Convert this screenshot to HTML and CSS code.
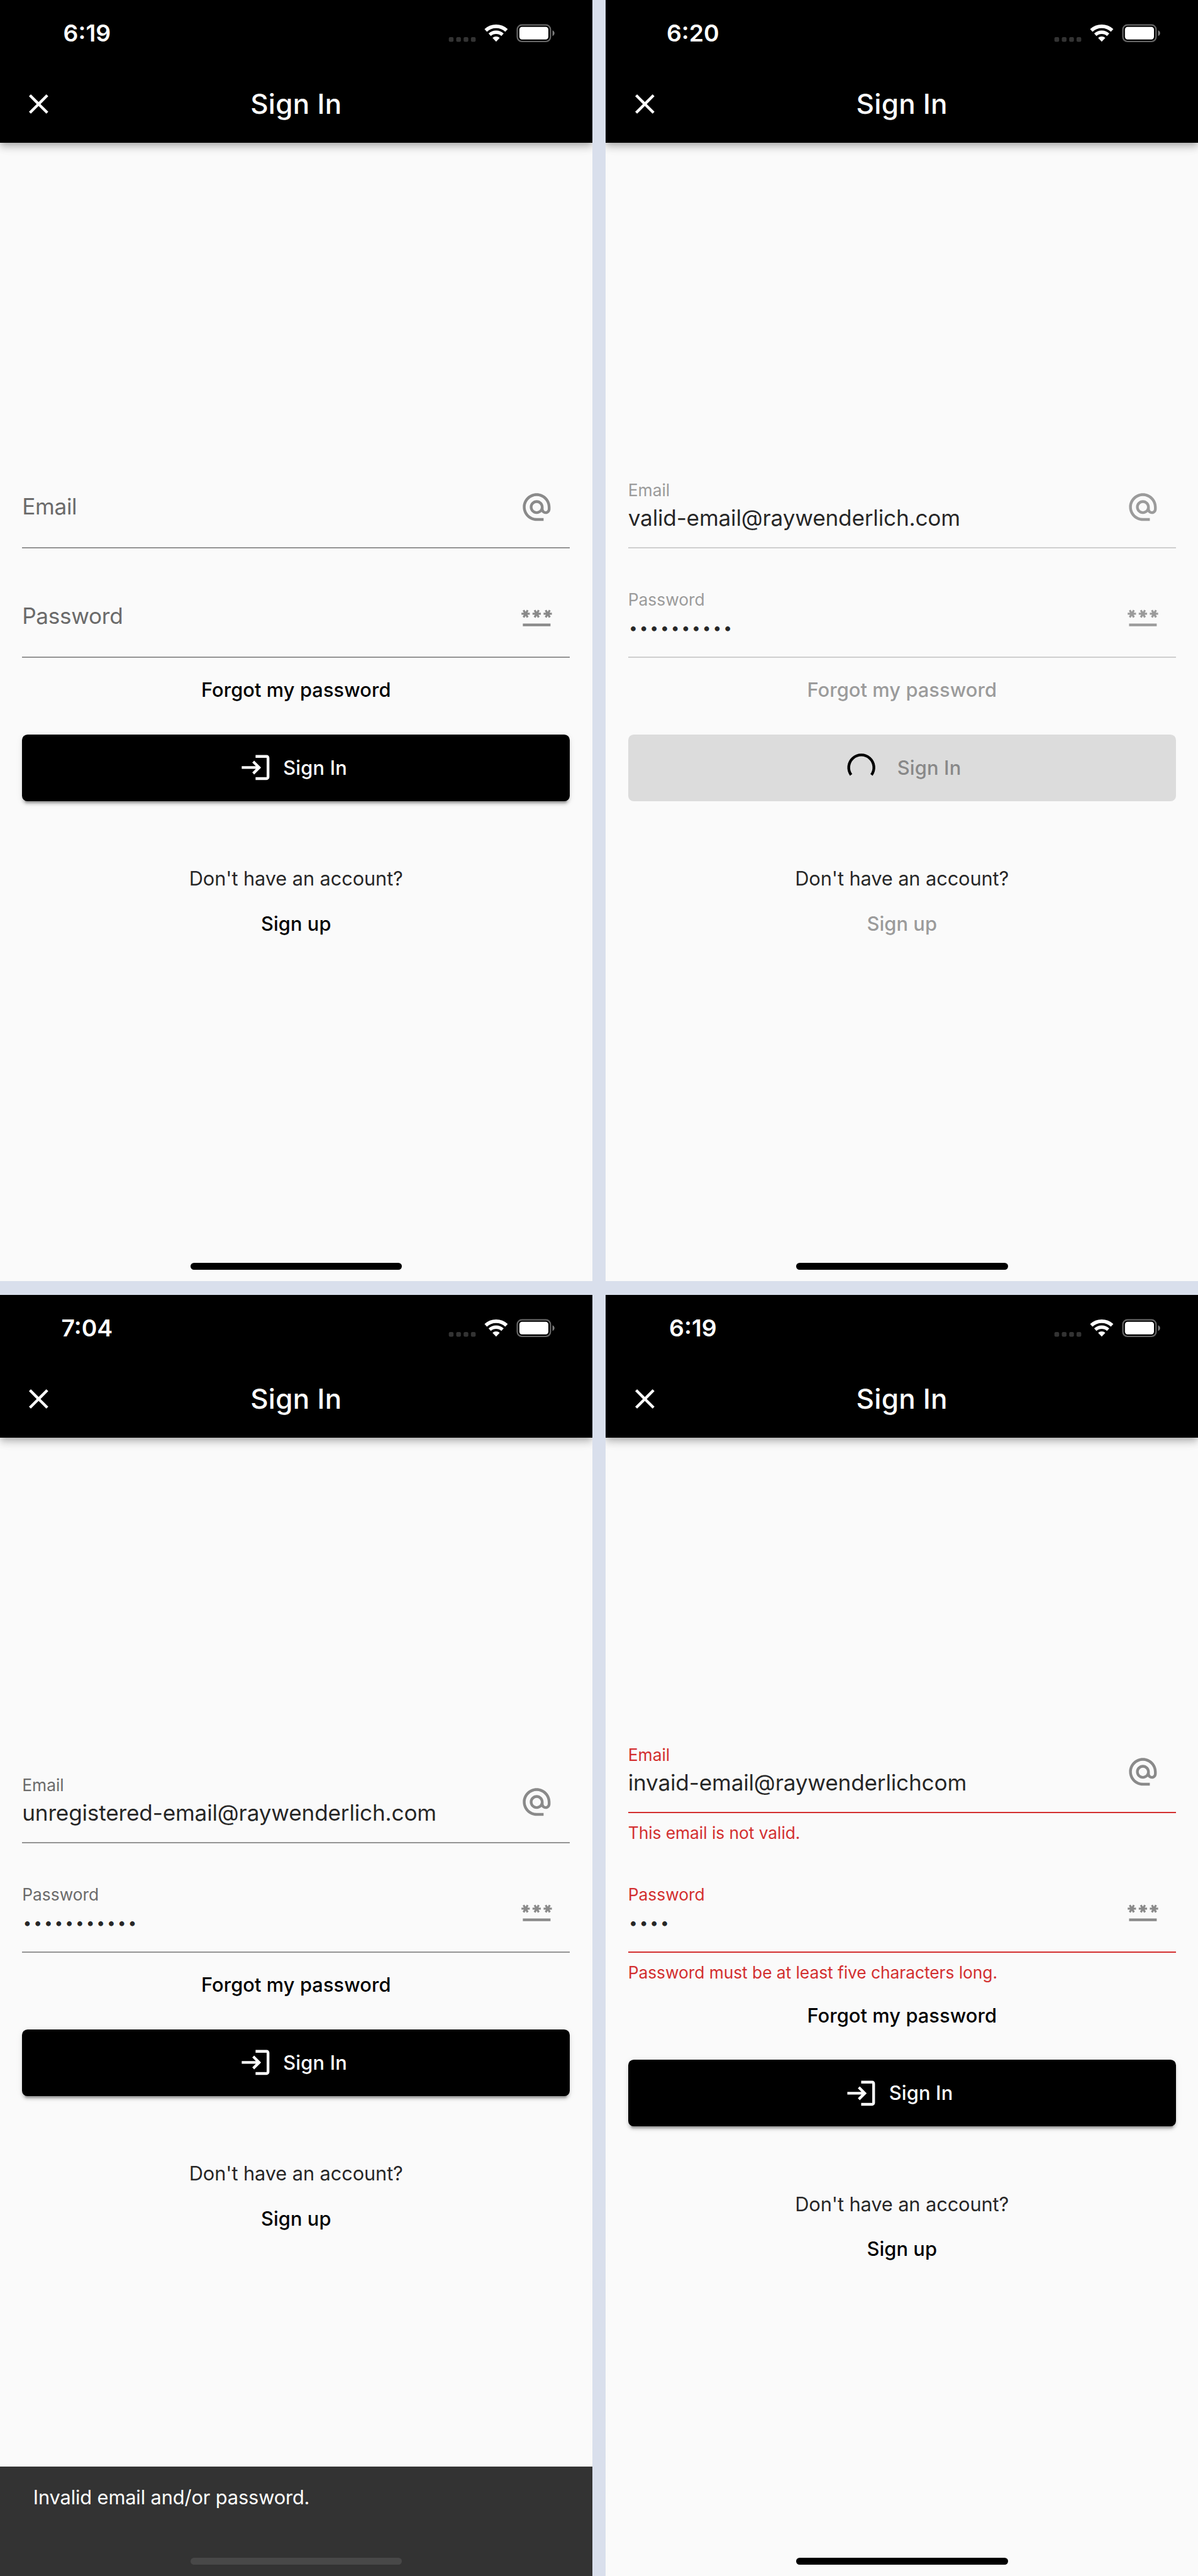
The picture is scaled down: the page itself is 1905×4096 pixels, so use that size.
FILE: index.html
```html
<!DOCTYPE html>
<html lang="en">
<head>
<meta charset="utf-8">
<title>Sign In</title>
<link rel="stylesheet" href="styles.css">
</head>
<body>
<svg class="sprite" aria-hidden="true">
  <symbol id="status" viewBox="324 17 77 14">
    <g fill="#333"><rect x="324.3" y="27" width="3.4" height="3.4" rx="1"/><rect x="329.65" y="27" width="3.4" height="3.4" rx="1"/><rect x="335" y="27" width="3.4" height="3.4" rx="1"/><rect x="340.3" y="27" width="3.4" height="3.4" rx="1"/></g>
    <g fill="none" stroke="#fff"><path stroke-width="2.6" d="M350.97 22.19A11.1 11.1 0 0 1 366.03 22.19"/><path stroke-width="2.5" d="M353.86 25.32A6.85 6.85 0 0 1 363.14 25.32"/></g>
    <path fill="#fff" d="M358.5 30.35L355.89 27.52A3.85 3.85 0 0 1 361.11 27.52Z"/>
    <rect x="373.8" y="18.2" width="24" height="12" rx="3.3" fill="none" stroke="#666"/>
    <rect x="375.3" y="19.6" width="21" height="9.1" rx="1.9" fill="#fff"/>
    <path fill="#808080" d="M399.3 22.1Q400.7 22.8 400.7 24.15T399.3 26.2Z"/>
  </symbol>
  <symbol id="close" viewBox="0 0 24 24"><path d="M19 6.41L17.59 5 12 10.59 6.41 5 5 6.41 10.59 12 5 17.59 6.41 19 12 13.41 17.59 19 19 17.59 13.41 12z"/></symbol>
  <symbol id="at" viewBox="0 0 24 24"><path d="M12 1.95c-5.52 0-10 4.48-10 10s4.48 10 10 10h5v-2h-5c-4.34 0-8-3.66-8-8s3.66-8 8-8 8 3.66 8 8v1.43c0 .79-.71 1.57-1.5 1.57s-1.5-.78-1.5-1.57v-1.43c0-2.76-2.24-5-5-5s-5 2.24-5 5 2.24 5 5 5c1.38 0 2.64-.56 3.54-1.47.65.89 1.77 1.47 2.96 1.47 1.97 0 3.5-1.6 3.5-3.57v-1.43c0-5.52-4.48-10-10-10zm0 13c-1.66 0-3-1.34-3-3s1.34-3 3-3 3 1.34 3 3-1.34 3-3 3z"/></symbol>
  <symbol id="password" viewBox="0 0 24 24"><path d="M2 17h20v2H2v-2zm1.15-4.05L4 11.47l.85 1.48 1.3-.75-.85-1.48H7v-1.5H5.3l.85-1.47L4.85 7 4 8.47 3.15 7l-1.3.75.85 1.47H1v1.5h1.7l-.85 1.48 1.3.75zm6.7-.75l1.3.75.85-1.48.85 1.48 1.3-.75-.85-1.48H15v-1.5h-1.7l.85-1.47-1.3-.75L12 8.47 11.15 7l-1.3.75.85 1.47H9v1.5h1.7l-.85 1.48zM23 9.22h-1.7l.85-1.47-1.3-.75L20 8.47 19.15 7l-1.3.75.85 1.47H17v1.5h1.7l-.85 1.48 1.3.75.85-1.48.85 1.48 1.3-.75-.85-1.48H23v-1.5z"/></symbol>
  <symbol id="login" viewBox="0 0 24 24"><path d="M11 7L9.6 8.4l2.6 2.6H2v2h10.2l-2.6 2.6L11 17l5-5-5-5zm9 12h-8v2h8c1.1 0 2-.9 2-2V5c0-1.1-.9-2-2-2h-8v2h8v14z"/></symbol>
  <symbol id="spinner" viewBox="0 0 24 24"><path fill="none" stroke="#000" stroke-width="2" d="M4.74 17.35A9.1 9.1 0 1 1 19.46 17.35"/></symbol>
</svg>

<main class="board">
  <section class="screen">
    <header class="header">
      <div class="statusbar"><span class="time">6:19</span><svg class="status"><use href="#status"/></svg></div>
      <div class="appbar"><svg class="icon"><use href="#close"/></svg><h1 class="title">Sign In</h1></div>
    </header>
    <form class="form">
      <div class="field"><div class="entry empty"><span class="placeholder">Email</span></div><svg class="icon"><use href="#at"/></svg></div>
      <div class="field"><div class="entry empty"><span class="placeholder">Password</span></div><svg class="icon"><use href="#password"/></svg></div>
      <a class="link forgot">Forgot my password</a>
      <div class="button"><svg class="icon"><use href="#login"/></svg><span>Sign In</span></div>
      <p class="question">Don't have an account?</p>
      <a class="link">Sign up</a>
    </form>
    <div class="home"></div>
  </section>

  <section class="screen">
    <header class="header">
      <div class="statusbar"><span class="time">6:20</span><svg class="status"><use href="#status"/></svg></div>
      <div class="appbar"><svg class="icon"><use href="#close"/></svg><h1 class="title">Sign In</h1></div>
    </header>
    <form class="form disabled">
      <div class="field"><div class="entry"><span class="label">Email</span><span class="value">valid-email@raywenderlich.com</span></div><svg class="icon"><use href="#at"/></svg></div>
      <div class="field"><div class="entry"><span class="label">Password</span><span class="value dots">••••••••••</span></div><svg class="icon"><use href="#password"/></svg></div>
      <a class="link forgot">Forgot my password</a>
      <div class="button"><svg class="icon"><use href="#spinner"/></svg><span>Sign In</span></div>
      <p class="question">Don't have an account?</p>
      <a class="link">Sign up</a>
    </form>
    <div class="home"></div>
  </section>

  <section class="screen">
    <header class="header">
      <div class="statusbar"><span class="time">7:04</span><svg class="status"><use href="#status"/></svg></div>
      <div class="appbar"><svg class="icon"><use href="#close"/></svg><h1 class="title">Sign In</h1></div>
    </header>
    <form class="form">
      <div class="field"><div class="entry"><span class="label">Email</span><span class="value">unregistered-email@raywenderlich.com</span></div><svg class="icon"><use href="#at"/></svg></div>
      <div class="field"><div class="entry"><span class="label">Password</span><span class="value dots">•••••••••••</span></div><svg class="icon"><use href="#password"/></svg></div>
      <a class="link forgot">Forgot my password</a>
      <div class="button"><svg class="icon"><use href="#login"/></svg><span>Sign In</span></div>
      <p class="question">Don't have an account?</p>
      <a class="link">Sign up</a>
    </form>
    <div class="snackbar">Invalid email and/or password.</div>
    <div class="home dim"></div>
  </section>

  <section class="screen">
    <header class="header">
      <div class="statusbar"><span class="time">6:19</span><svg class="status"><use href="#status"/></svg></div>
      <div class="appbar"><svg class="icon"><use href="#close"/></svg><h1 class="title">Sign In</h1></div>
    </header>
    <form class="form invalid">
      <div class="field"><div class="entry"><span class="label">Email</span><span class="value">invaid-email@raywenderlichcom</span></div><svg class="icon"><use href="#at"/></svg></div>
      <p class="error">This email is not valid.</p>
      <div class="field"><div class="entry"><span class="label">Password</span><span class="value dots">••••</span></div><svg class="icon"><use href="#password"/></svg></div>
      <p class="error">Password must be at least five characters long.</p>
      <a class="link forgot">Forgot my password</a>
      <div class="button"><svg class="icon"><use href="#login"/></svg><span>Sign In</span></div>
      <p class="question">Don't have an account?</p>
      <a class="link">Sign up</a>
    </form>
    <div class="home"></div>
  </section>
</main>
</body>
</html>
```
FILE: styles.css
```css
/* 1rem is ten device-independent points of the phone screens */
html { font-size: calc(100vw / 86.6); }
* { box-sizing: border-box; }
body { margin: 0; background: #d9dfec; font-family: Inter, "Liberation Sans", sans-serif; overflow: hidden; }
p, h1 { margin: 0; }
.sprite { position: absolute; width: 0; height: 0; }

.board { display: grid; grid-template-columns: 42.8rem 42.8rem; gap: 1rem; }
.screen { position: relative; height: 92.6rem; background: #fafafa; overflow: hidden; display: flex; flex-direction: column; }

.header { flex: none; height: 10.3rem; background: #000; color: #fff; box-shadow: 0 .2rem .4rem -.1rem rgba(0,0,0,.2), 0 .4rem .5rem rgba(0,0,0,.14), 0 .1rem 1rem rgba(0,0,0,.08); }
.statusbar { height: 4.7rem; display: flex; justify-content: space-between; padding: 1.43rem 2.7rem 0 3.29rem; }
.time { width: 6rem; text-align: center; font-size: 1.7rem; line-height: 2rem; font-weight: 600; }
.status { width: 7.7rem; height: 1.4rem; margin-top: .27rem; }
.appbar { height: 5.6rem; display: grid; grid-template-columns: 2.4rem 1fr 2.4rem; align-items: center; padding: 0 1.6rem; }
.title { font-size: 2rem; line-height: 2.4rem; font-weight: 500; text-align: center; letter-spacing: .012rem; }
.icon { display: block; flex: none; width: 2.4rem; height: 2.4rem; fill: currentColor; }

.form { flex: 1; display: flex; flex-direction: column; padding: 23.05rem 1.6rem 0; color: rgba(0,0,0,.87); }
.form.invalid { padding-top: 20.85rem; }
.field { height: 6.3rem; display: flex; justify-content: space-between; border-bottom: .1rem solid #949494; margin-bottom: 1.6rem; }
.field .icon { margin: 2.12rem 1.2rem 0 0; color: #8a8a8a; }
.entry { display: flex; flex-direction: column; gap: .18rem; padding-top: 1.3rem; }
.entry.empty { padding-top: 2.24rem; }
.label { font-size: 1.2rem; line-height: 1.6rem; color: #6b6b6b; }
.placeholder { font-size: 1.6rem; line-height: 2rem; color: #6b6b6b; letter-spacing: -.015rem; }
.value { font-size: 1.6rem; line-height: 2rem; white-space: nowrap; letter-spacing: -.009rem; }
.dots { font-size: 1.12rem; line-height: 2.15rem; letter-spacing: .129rem; padding-left: .06rem; }
.error { height: 2.2rem; margin-top: -1.6rem; margin-bottom: 1.6rem; padding-top: .64rem; font-size: 1.2rem; line-height: 1.6rem; color: #d32f2f; letter-spacing: -.0025rem; }

.link { font-size: 1.4rem; line-height: 2rem; font-weight: 500; color: #000; text-align: center; letter-spacing: .004rem; }
.forgot { margin-top: -.27rem; height: 4.22rem; }
.button { height: 4.8rem; border-radius: .4rem; background: #000; color: #fff; display: flex; align-items: center; justify-content: center; gap: .8rem; padding: 0 1.64rem 0 1.2rem; font-size: 1.4rem; line-height: 2rem; font-weight: 500; letter-spacing: .008rem; box-shadow: 0 .3rem .1rem -.2rem rgba(0,0,0,.2), 0 .2rem .2rem rgba(0,0,0,.14), 0 .1rem .5rem rgba(0,0,0,.08); }
.question { margin-top: 4.62rem; font-size: 1.4rem; line-height: 2rem; text-align: center; margin-bottom: 1.25rem; letter-spacing: -.005rem; }

.disabled .field { border-bottom: .1rem solid #cfcfcf; }
.disabled .label, .disabled .link, .disabled .field .icon { color: #9b9b9b; }
.disabled .button { background: #dcdcdc; color: #888; box-shadow: none; gap: 1.4rem; padding: 0 0 0 .14rem; }
.invalid .field { border-color: #d32f2f; }
.invalid .label { color: #d32f2f; }

.home { position: absolute; left: 13.77rem; bottom: .8rem; width: 15.3rem; height: .5rem; border-radius: .25rem; background: #000; }
.home.dim { background: #484848; }
.snackbar { flex: none; height: 7.9rem; padding: 1.2rem 2.4rem; background: #333; color: #fff; font-size: 1.4rem; line-height: 2rem; letter-spacing: -.006rem; }
```
